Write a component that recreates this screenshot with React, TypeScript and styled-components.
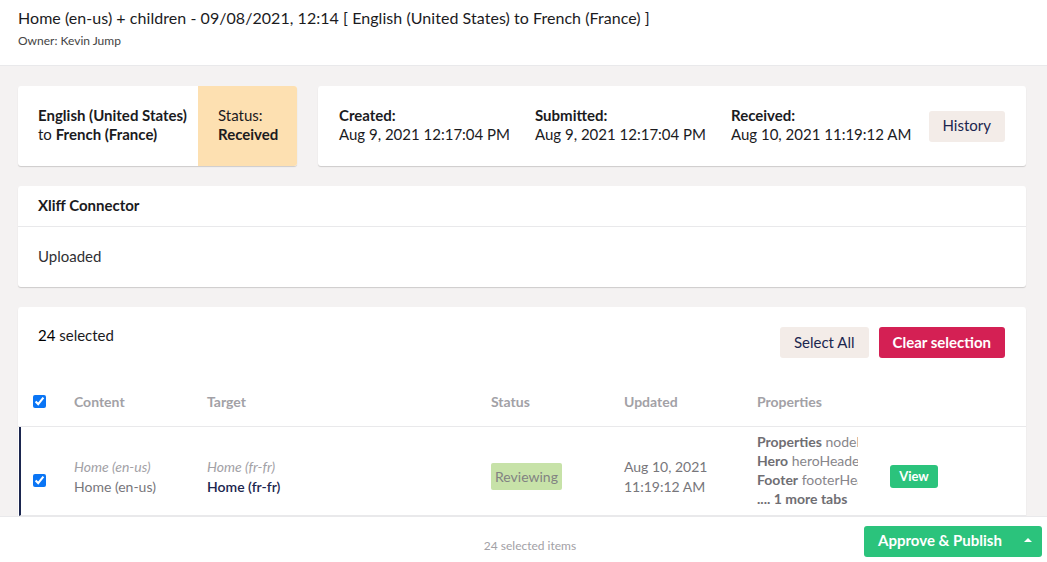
import React from "react";
import styled, { createGlobalStyle } from "styled-components";

const Global = createGlobalStyle`
  html, body { margin: 0; padding: 0; height: 100%; }
  body {
    font-family: Lato, "Open Sans", "Liberation Sans", sans-serif;
    color: #303033;
    background: #f4f2f2;
    overflow: hidden;
  }
  #root { height: 100%; }
  * { box-sizing: border-box; }
`;

const Page = styled.div`
  height: 100vh;
  display: flex;
  flex-direction: column;
`;

const Header = styled.header`
  background: #fff;
  border-bottom: 1px solid #e9e9eb;
  height: 66px;
  padding: 8px 18px 0;
  flex-shrink: 0;
`;

const Title = styled.h1`
  margin: 0;
  font-size: 16px;
  font-weight: 400;
  color: #1b1b1e;
  line-height: 20px;
  letter-spacing: 0.05px;
`;

const Owner = styled.div`
  font-size: 12px;
  color: #444;
  margin-top: 5px;
  line-height: 15px;
`;

const Main = styled.main`
  flex: 1;
  overflow: hidden;
  padding: 20px 21px 0 18px;
  display: flex;
  flex-direction: column;
  gap: 20px;
`;

const Card = styled.section`
  background: #fff;
  border-radius: 3px;
  box-shadow: 0 1px 1px rgba(0, 0, 0, 0.16);
`;

const TopRow = styled.div`
  display: flex;
  gap: 21px;
`;

const LangCard = styled(Card)`
  display: flex;
  width: 279px;
  height: 80px;
  overflow: hidden;
`;

const LangText = styled.div`
  flex: 1;
  padding: 0 0 3px 20px;
  display: flex;
  flex-direction: column;
  justify-content: center;
  font-size: 15px;
  line-height: 19px;
  color: #1b1b1e;
`;

const StatusBox = styled.div`
  width: 99px;
  background: #fde0b1;
  padding: 0 0 3px 20px;
  display: flex;
  flex-direction: column;
  justify-content: center;
  font-size: 15px;
  line-height: 19px;
  color: #1b1b1e;
`;

const DatesCard = styled(Card)`
  flex: 1;
  height: 80px;
  display: flex;
  align-items: center;
  padding: 0 21px 0 21px;
`;

const DateBlock = styled.div`
  width: 196px;
  font-size: 15px;
  line-height: 19px;
  color: #1b1b1e;
  margin-top: -3px;
`;

const Button = styled.button<{ $variant?: "default" | "danger" | "success" }>`
  font-family: inherit;
  border: 0;
  border-radius: 3px;
  height: 31px;
  font-size: 15px;
  cursor: pointer;
  padding: 0 14px 2px;
  background: ${(p) =>
    p.$variant === "danger" ? "#d42054" : p.$variant === "success" ? "#2bc37c" : "#f3ece8"};
  color: ${(p) => (p.$variant ? "#fff" : "#1b264f")};
  font-weight: ${(p) => (p.$variant ? 700 : 400)};
`;

const PushRight = styled.div`
  margin-left: auto;
`;

const ConnectorCard = styled(Card)``;

const CardHead = styled.div`
  height: 41px;
  padding: 0 20px 3px;
  display: flex;
  align-items: center;
  font-weight: 700;
  font-size: 15px;
  color: #1b1b1e;
  border-bottom: 1px solid #e9e9eb;
`;

const CardBody = styled.div`
  height: 60px;
  padding: 0 20px 3px;
  display: flex;
  align-items: center;
  font-size: 15px;
`;

const TableCard = styled(Card)`
  flex: 1;
  border-radius: 3px 3px 0 0;
`;

const TableToolbar = styled.div`
  display: flex;
  align-items: flex-start;
  padding: 20px 21px 0 20px;
  height: 74px;
  gap: 10px;
`;

const SelectedCount = styled.div`
  font-size: 15px;
  line-height: 19px;
  margin-top: -1px;
  color: #1b1b1e;
  b { font-weight: 400; color: #000; }
`;

const Grid = styled.div<{ $selected?: boolean }>`
  display: grid;
  grid-template-columns: ${(p) => (p.$selected ? "53px" : "56px")} 133px 284px 133px 133px 133px 1fr;
  align-items: center;
  margin-left: ${(p) => (p.$selected ? "1px" : "0")};
  border-left: ${(p) => (p.$selected ? "2px solid #1b264f" : "0")};
  border-bottom: 1px solid #e9e9eb;
`;

const HeadRow = styled(Grid)`
  height: 46px;
  padding-bottom: 4px;
  font-size: 14px;
  font-weight: 700;
  color: #a2a1a6;
`;

const BodyRow = styled(Grid)`
  height: 89px;
  font-size: 14px;
`;

const CheckCell = styled.div<{ $pad: number; $shift?: number }>`
  padding-left: ${(p) => p.$pad}px;
  margin-top: ${(p) => p.$shift ?? 0}px;
  display: flex;
  align-items: center;
`;

const Check = styled.input`
  margin: 0;
  width: 13px;
  height: 13px;
  accent-color: #0a75f5;
`;

const Shifted = styled.div`
  margin-top: 11px;
`;

const Stack = styled(Shifted)`
  display: flex;
  flex-direction: column;
  line-height: 20px;
`;

const Muted = styled.span`
  font-style: italic;
  color: #a2a1a6;
  font-size: 14px;
`;

const Plain = styled.span<{ $dark?: boolean }>`
  color: ${(p) => (p.$dark ? "#1b264f" : "#77767b")};
  font-size: 14px;
  font-weight: ${(p) => (p.$dark ? 600 : 400)};
`;

const Tag = styled.span`
  justify-self: start;
  margin-top: 11px;
  background: #c7e2a8;
  color: #828282;
  font-size: 14px;
  height: 27px;
  display: inline-flex;
  align-items: center;
  padding: 0 4px 1px;
  border-radius: 2px;
`;

const Updated = styled(Shifted)`
  color: #77767b;
  line-height: 20px;
  font-size: 14px;
`;

const Props = styled.div`
  width: 101px;
  overflow: hidden;
  white-space: nowrap;
  font-size: 14px;
  line-height: 19px;
  margin-top: -2px;
  color: #87868b;
  b { color: #6f6e73; font-weight: 700; }
`;

const SmallButton = styled.button`
  justify-self: start;
  margin-top: 11px;
  font-family: inherit;
  border: 0;
  border-radius: 3px;
  background: #2bc37c;
  color: #fff;
  font-weight: 700;
  font-size: 13px;
  height: 23px;
  width: 48px;
  padding: 0 0 1px;
`;

const Footer = styled.footer`
  background: #fff;
  border-top: 1px solid #e9e9eb;
  height: 46px;
  flex-shrink: 0;
  display: grid;
  grid-template-columns: 1fr auto 1fr;
  align-items: center;
  padding: 0 5px 0 18px;
`;

const FooterText = styled.div`
  font-size: 12px;
  color: #a2a1a6;
  padding-top: 11px;
`;

const SplitButton = styled.button`
  justify-self: end;
  font-family: inherit;
  border: 0;
  border-radius: 3px;
  background: #2bc37c;
  color: #fff;
  font-weight: 700;
  font-size: 15px;
  height: 31px;
  width: 178px;
  margin-top: 3px;
  display: flex;
  align-items: center;
  padding: 0 0 2px 14px;
`;

const Caret = styled.span`
  margin-left: auto;
  margin-right: 10px;
  width: 0;
  height: 0;
  border-left: 4px solid transparent;
  border-right: 4px solid transparent;
  border-bottom: 4px solid #fff;
`;

export default function App() {
  return (
    <Page>
      <Global />
      <Header>
        <Title>Home (en-us) + children - 09/08/2021, 12:14 [ English (United States) to French (France) ]</Title>
        <Owner>Owner: Kevin Jump</Owner>
      </Header>
      <Main>
        <TopRow>
          <LangCard>
            <LangText>
              <b>English (United States)</b>
              <span>
                to <b>French (France)</b>
              </span>
            </LangText>
            <StatusBox>
              <span>Status:</span>
              <b>Received</b>
            </StatusBox>
          </LangCard>
          <DatesCard>
            <DateBlock>
              <b>Created:</b>
              <div>Aug 9, 2021 12:17:04 PM</div>
            </DateBlock>
            <DateBlock>
              <b>Submitted:</b>
              <div>Aug 9, 2021 12:17:04 PM</div>
            </DateBlock>
            <DateBlock>
              <b>Received:</b>
              <div>Aug 10, 2021 11:19:12 AM</div>
            </DateBlock>
            <PushRight>
              <Button>History</Button>
            </PushRight>
          </DatesCard>
        </TopRow>
        <ConnectorCard>
          <CardHead>Xliff Connector</CardHead>
          <CardBody>Uploaded</CardBody>
        </ConnectorCard>
        <TableCard>
          <TableToolbar>
            <SelectedCount>
              <b>24</b> selected
            </SelectedCount>
            <PushRight>
              <Button>Select All</Button>
            </PushRight>
            <Button $variant="danger">Clear selection</Button>
          </TableToolbar>
          <HeadRow>
            <CheckCell $pad={15}>
              <Check type="checkbox" defaultChecked />
            </CheckCell>
            <span>Content</span>
            <span>Target</span>
            <span>Status</span>
            <span>Updated</span>
            <span>Properties</span>
            <span />
          </HeadRow>
          <BodyRow $selected>
            <CheckCell $pad={12} $shift={18}>
              <Check type="checkbox" defaultChecked />
            </CheckCell>
            <Stack>
              <Muted>Home (en-us)</Muted>
              <Plain>Home (en-us)</Plain>
            </Stack>
            <Stack>
              <Muted>Home (fr-fr)</Muted>
              <Plain $dark>Home (fr-fr)</Plain>
            </Stack>
            <Tag>Reviewing</Tag>
            <Updated>
              Aug 10, 2021
              <br />
              11:19:12 AM
            </Updated>
            <Props>
              <div>
                <b>Properties</b> nodeName
              </div>
              <div>
                <b>Hero</b> heroHeader
              </div>
              <div>
                <b>Footer</b> footerHeader
              </div>
              <div>
                <b>.... 1 more tabs</b>
              </div>
            </Props>
            <SmallButton>View</SmallButton>
          </BodyRow>
        </TableCard>
      </Main>
      <Footer>
        <span />
        <FooterText>24 selected items</FooterText>
        <SplitButton>
          Approve &amp; Publish
          <Caret />
        </SplitButton>
      </Footer>
    </Page>
  );
}
